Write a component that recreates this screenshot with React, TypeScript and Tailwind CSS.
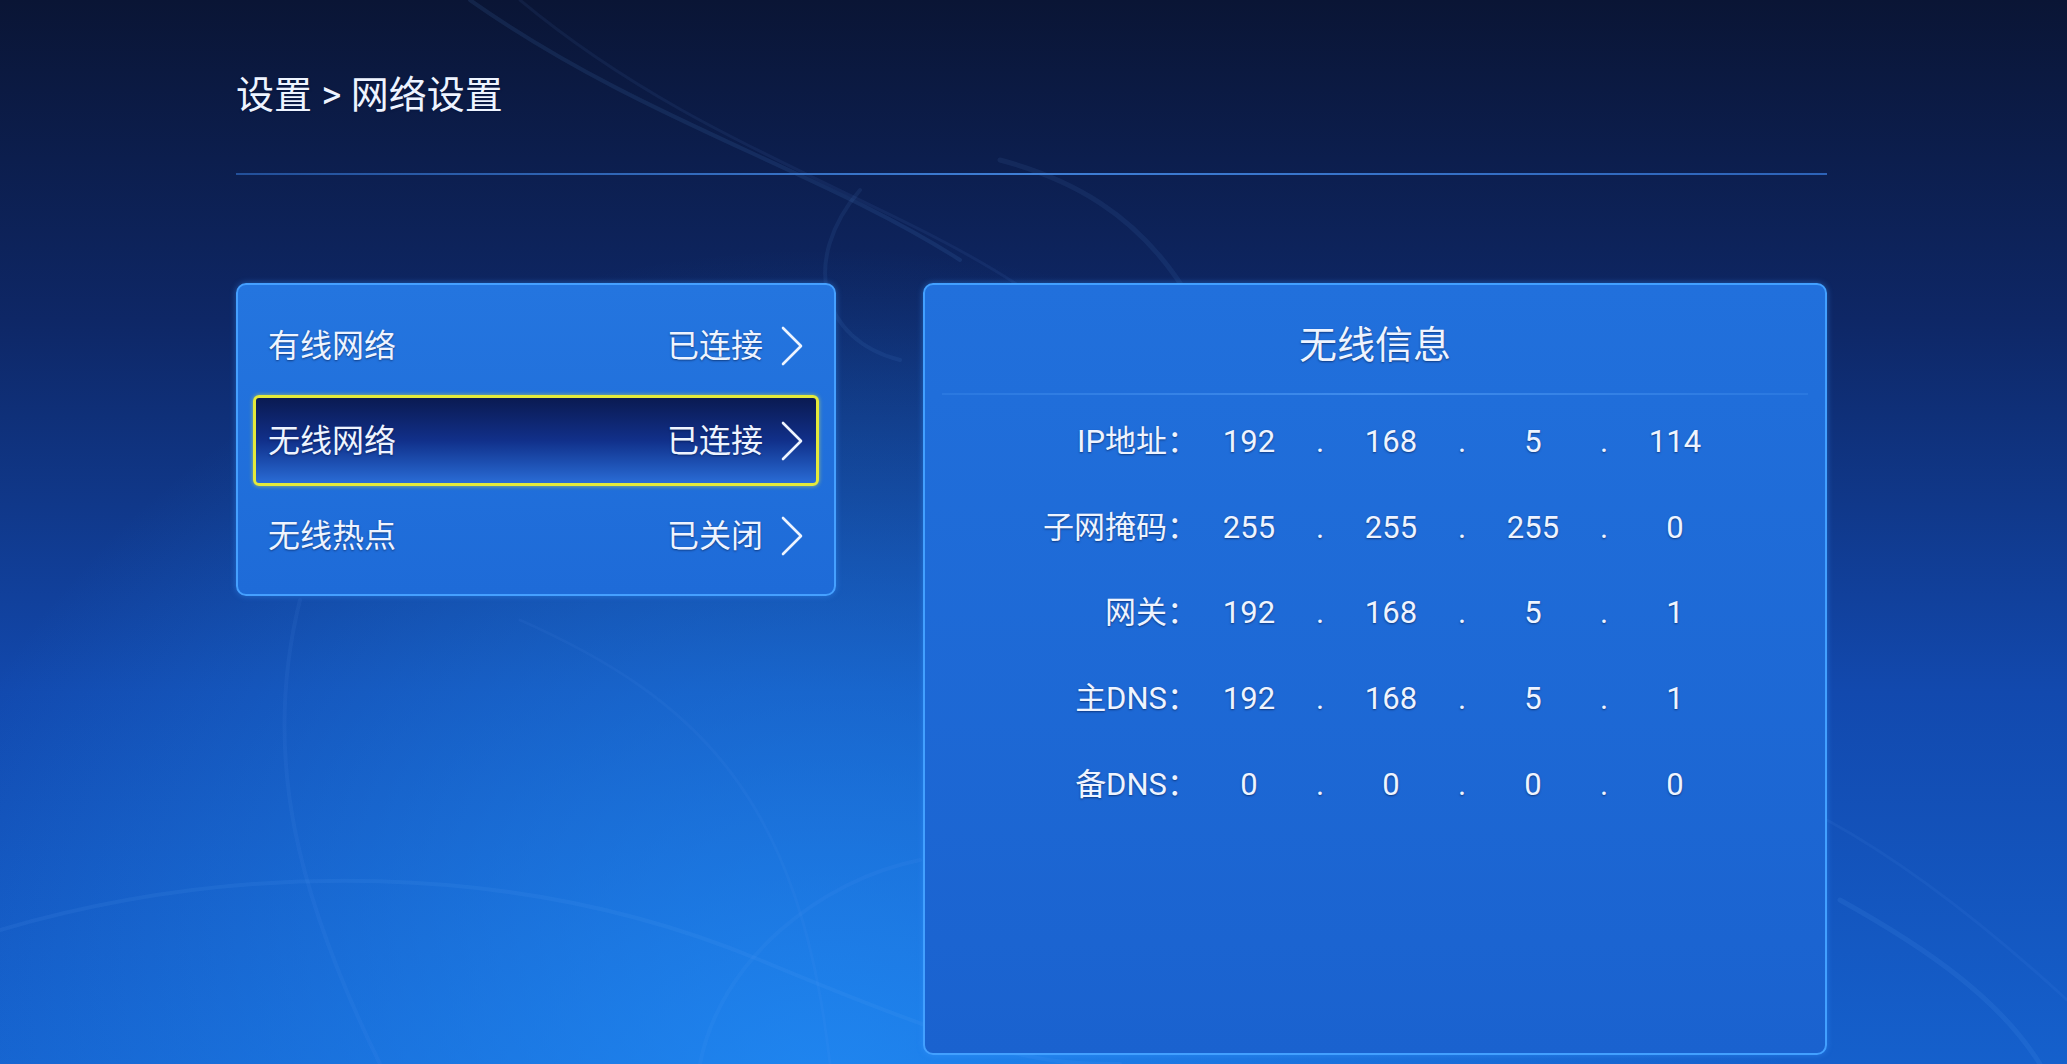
import React from 'react';

type MenuRow = { label: string; status: string; selected?: boolean };

const menuRows: MenuRow[] = [
  { label: '有线网络', status: '已连接' },
  { label: '无线网络', status: '已连接', selected: true },
  { label: '无线热点', status: '已关闭' },
];

const infoRows: { label: string; parts: string[] }[] = [
  { label: 'IP地址：', parts: ['192', '168', '5', '114'] },
  { label: '子网掩码：', parts: ['255', '255', '255', '0'] },
  { label: '网关：', parts: ['192', '168', '5', '1'] },
  { label: '主DNS：', parts: ['192', '168', '5', '1'] },
  { label: '备DNS：', parts: ['0', '0', '0', '0'] },
];

const Chevron = () => (
  <svg width="22" height="40" viewBox="0 0 22 40" fill="none" className="shrink-0">
    <polyline points="2,2 20,20 2,38" stroke="#eef4ff" strokeWidth="2.6" strokeLinecap="round" strokeLinejoin="round" />
  </svg>
);

// faint swirl lines of the TV launcher wallpaper
const Swirls = () => (
  <svg className="absolute inset-0 pointer-events-none" width="2067" height="1064" viewBox="0 0 2067 1064" fill="none">
    <g stroke="#6fb0ff" strokeLinecap="round">
      <path d="M470 0 C 640 120, 820 170, 960 260" strokeWidth="4" strokeOpacity="0.10" />
      <path d="M520 0 C 700 150, 900 200, 1040 300" strokeWidth="3" strokeOpacity="0.07" />
      <path d="M1000 160 C 1150 200, 1230 300, 1270 560" strokeWidth="5" strokeOpacity="0.08" />
      <path d="M860 190 C 800 260, 820 340, 900 360" strokeWidth="4" strokeOpacity="0.08" />
      <path d="M0 930 C 240 860, 520 860, 760 960 S 1040 1064, 1120 1064" strokeWidth="4" strokeOpacity="0.09" />
      <path d="M300 600 C 260 760, 300 900, 380 1064" strokeWidth="4" strokeOpacity="0.07" />
      <path d="M520 620 C 700 700, 800 800, 830 1064" strokeWidth="3" strokeOpacity="0.06" />
      <path d="M700 1064 C 720 960, 820 880, 920 860" strokeWidth="4" strokeOpacity="0.07" />
      <path d="M1840 900 C 1930 950, 2000 1000, 2040 1064" strokeWidth="5" strokeOpacity="0.10" />
      <path d="M1827 820 C 1900 860, 1980 920, 2067 1000" strokeWidth="3" strokeOpacity="0.07" />
    </g>
  </svg>
);

export default function App() {
  return (
    <div
      className="relative w-full h-[1064px] overflow-hidden text-[#eef4ff] [text-shadow:0_1px_2px_rgba(0,18,60,0.55)] bg-[image:radial-gradient(ellipse_at_40%_105%,rgba(34,144,250,0.8)_0%,rgba(34,144,250,0)_55%),linear-gradient(180deg,#0a1535_0%,#0e2766_30%,#1249ae_65%,#1560cc_100%)]"
      style={{ fontFamily: 'Roboto, "Noto Sans CJK SC", "Noto Sans", sans-serif' }}
    >
      <Swirls />

      <div className="relative flex flex-col pl-[236px] pt-[75px] w-[1827px] box-content">
        {/* Breadcrumb */}
        <div className="text-[38px] leading-[40px] h-[40px] whitespace-pre">设置 &gt; 网络设置</div>

        {/* Header divider */}
        <div className="mt-[58px] h-[2px] w-[1591px] bg-gradient-to-r from-[#23509a] via-[#3f7fd6] to-[#2d63b8]" />

        <div className="mt-[108px] flex gap-[87px]">
          {/* Left menu */}
          <div className="w-[600px] h-[313px] rounded-[10px] border-2 border-[#45a0ff] bg-gradient-to-b from-[#2475df] to-[#1e6bd8] pt-[13px] pb-[11px] flex flex-col shadow-[0_0_6px_rgba(60,150,255,0.45)]">
            {menuRows.map((row) => (
              <div
                key={row.label}
                className={
                  row.selected
                    ? 'mx-[15px] my-[2px] h-[91px] shrink-0 rounded-[6px] border-[3px] border-[#e4ea3a] bg-gradient-to-b from-[#0a1a52] via-[#11308a] to-[#2a6cd6] pl-[12px] pr-[13px] flex items-center justify-between shadow-[0_0_4px_rgba(230,235,60,0.6)]'
                    : 'mx-[15px] my-[2px] h-[91px] shrink-0 rounded-[6px] border-[3px] border-transparent pl-[12px] pr-[13px] flex items-center justify-between'
                }
              >
                <span className="text-[32px] leading-[40px]">{row.label}</span>
                <div className="flex items-center gap-[18px]">
                  <span className="text-[32px] leading-[40px]">{row.status}</span>
                  <Chevron />
                </div>
              </div>
            ))}
          </div>

          {/* Right info panel */}
          <div className="w-[904px] h-[772px] rounded-[10px] border-2 border-[#42a0ff] bg-gradient-to-b from-[#2170dc] to-[#1a62cf] flex flex-col shadow-[0_0_6px_rgba(60,150,255,0.45)]">
            <div className="pt-[36px] text-center text-[38px] leading-[48px]">无线信息</div>
            <div className="mt-[24px] mx-[17px] h-[2px] bg-gradient-to-r from-[#2a78e0] via-[#3f8cec] to-[#2a78e0]" />
            <div className="mt-[4px] flex flex-col">
              {infoRows.map((r) => (
                <div
                  key={r.label}
                  className="h-[85.7px] grid grid-cols-[273px_102px_40px_102px_40px_102px_40px_102px] items-center text-[31px] leading-[40px]"
                >
                  <span className="text-right">{r.label}</span>
                  <span className="text-center">{r.parts[0]}</span>
                  <span className="text-center">.</span>
                  <span className="text-center">{r.parts[1]}</span>
                  <span className="text-center">.</span>
                  <span className="text-center">{r.parts[2]}</span>
                  <span className="text-center">.</span>
                  <span className="text-center">{r.parts[3]}</span>
                </div>
              ))}
            </div>
          </div>
        </div>
      </div>
    </div>
  );
}
